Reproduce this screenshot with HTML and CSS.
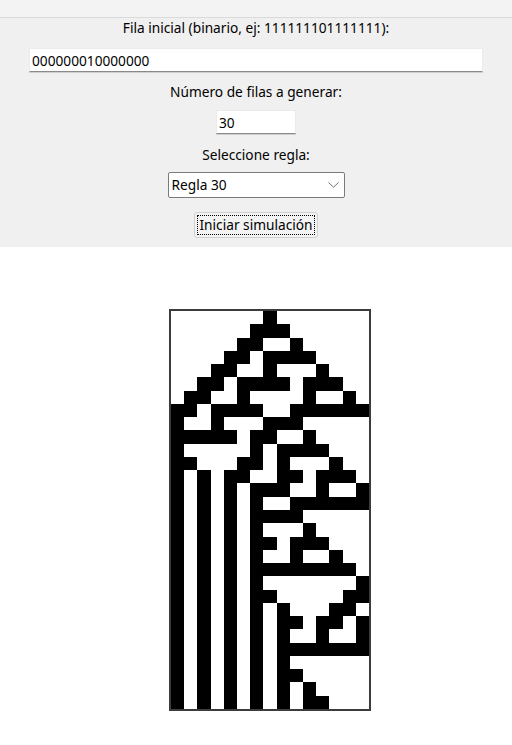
FILE: index.html
```html
<!DOCTYPE html>
<html lang="es">
<head>
<meta charset="utf-8">
<title>Autómata celular</title>
<link rel="stylesheet" href="styles.css">
</head>
<body>
<div class="topbar"></div>
<div class="panel">
  <div class="label l1">Fila inicial (binario, ej: 111111101111111):</div>
  <input class="entry entry-wide" type="text" value="000000010000000">
  <div class="label l2">Número de filas a generar:</div>
  <input class="entry entry-small" type="text" value="30">
  <div class="label l3">Seleccione regla:</div>
  <div class="combo">
    <span class="combo-text">Regla 30</span>
    <svg class="chevron" width="11" height="6" viewBox="0 0 11 6"><polyline points="0.5,0.5 5.5,5.2 10.5,0.5" fill="none" stroke="#707070" stroke-width="1"/></svg>
  </div>
  <button class="button" type="button"><span class="focus">Iniciar simulación</span></button>
</div>
<div class="canvas-wrap">
  <div class="grid" id="grid"></div>
</div>
<script src="script.js"></script>
</body>
</html>
```

FILE: styles.css
```css
html, body {
  margin: 0;
  padding: 0;
  background: #ffffff;
}
body {
  font-family: "Noto Sans", "Open Sans", sans-serif;
  font-size: 13.7px;
  color: #000;
  width: 512px;
}
.topbar {
  height: 17px;
  background: #f3f3f3;
  border-bottom: 1px solid #dadada;
}
.panel {
  background: #f0f0f0;
  display: flex;
  flex-direction: column;
  align-items: center;
  padding-bottom: 9px;
}
.label {
  line-height: 18px;
  height: 18px;
  white-space: nowrap;
}
.l1 { margin-top: 1px; }
.l2 { margin-top: 11px; }
.l3 { margin-top: 12px; }
.entry {
  box-sizing: border-box;
  height: 24px;
  margin: 0;
  padding: 0 2px;
  font-family: inherit;
  font-size: 13.7px;
  color: #000;
  background: #fff;
  border: 1px solid #ebebeb;
  border-bottom: 1px solid #8a8a8a;
  border-radius: 0;
  outline: none;
  box-shadow: 0 1px 0 #cfcfcf;
}
.entry-wide {
  width: 454px;
  margin-top: 11px;
}
.entry-small {
  width: 80px;
  margin-top: 9px;
}
.combo {
  box-sizing: border-box;
  width: 177px;
  height: 26px;
  margin-top: 8px;
  background: #fff;
  border: 1px solid #7a7a7a;
  border-radius: 2px;
  display: flex;
  align-items: center;
  justify-content: space-between;
  padding: 0 5px 0 3px;
}
.combo-text {
  line-height: 18px;
}
.chevron {
  display: block;
}
.button {
  box-sizing: border-box;
  width: 124px;
  height: 26px;
  margin-top: 14px;
  padding: 2px;
  font-family: inherit;
  font-size: 13.7px;
  color: #000;
  background: #f3f3f3;
  border: 1px solid #d0d0d0;
  border-radius: 3px;
  display: flex;
  align-items: stretch;
}
.focus {
  flex: 1;
  border: 1px dotted #000;
  display: flex;
  align-items: center;
  justify-content: center;
  line-height: 18px;
  white-space: nowrap;
}
.canvas-wrap {
  display: flex;
  justify-content: center;
  padding-left: 28px;
  margin-top: 62px;
}
.grid {
  width: 198px;
  height: 398px;
  border: 2px solid #3c3c3c;
  display: grid;
  grid-template-columns: repeat(15, 1fr);
  grid-template-rows: repeat(30, 1fr);
  background: #fff;
}
.cell.on {
  background: #000;
}
```

FILE: script.js
```js
(function () {
  var cols = 15, rows = 30, rule = 30;
  var row = "000000010000000".split("").map(Number);
  var grid = document.getElementById("grid");
  for (var r = 0; r < rows; r++) {
    for (var c = 0; c < cols; c++) {
      var d = document.createElement("div");
      d.className = row[c] ? "cell on" : "cell";
      grid.appendChild(d);
    }
    var next = [];
    for (var i = 0; i < cols; i++) {
      var l = i > 0 ? row[i - 1] : 0;
      var m = row[i];
      var rr = i < cols - 1 ? row[i + 1] : 0;
      var idx = (l << 2) | (m << 1) | rr;
      next.push((rule >> idx) & 1);
    }
    row = next;
  }
})();
```
